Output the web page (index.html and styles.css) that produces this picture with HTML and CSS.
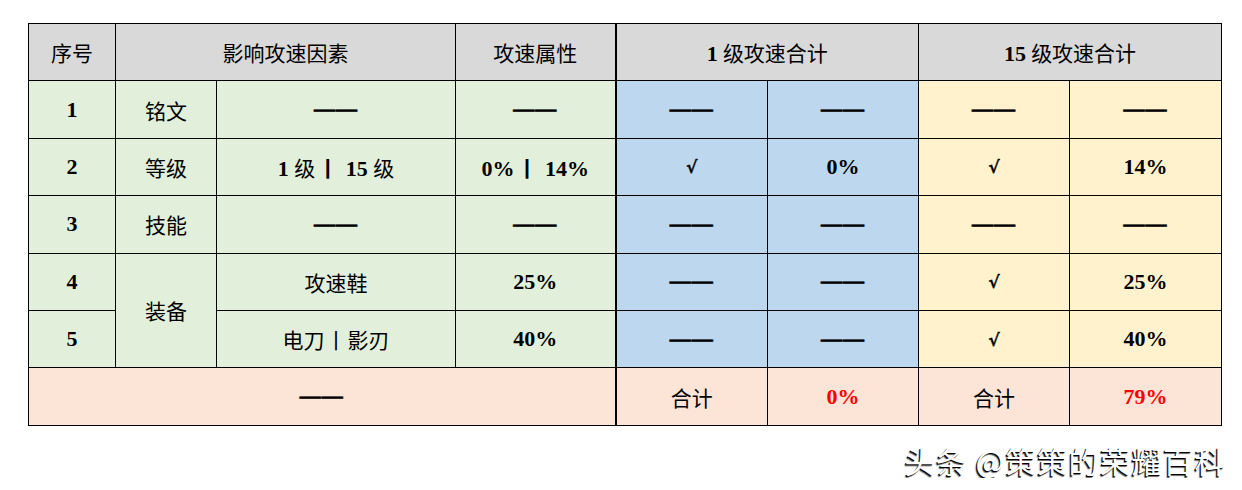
FILE: index.html
```html
<!DOCTYPE html>
<html lang="zh">
<head>
<meta charset="utf-8">
<link rel="stylesheet" href="styles.css">
</head>
<body>
<div class="page">
  <table class="grid">
    <colgroup>
      <col class="c1"><col class="c2"><col class="c3"><col class="c4">
      <col class="c5"><col class="c6"><col class="c7"><col class="c8">
    </colgroup>
    <tr class="head">
      <td>序号</td>
      <td colspan="2">影响攻速因素</td>
      <td class="split">攻速属性</td>
      <td colspan="2"><b>1</b> 级攻速合计</td>
      <td colspan="2"><b>15</b> 级攻速合计</td>
    </tr>
    <tr>
      <td class="g"><b>1</b></td>
      <td class="g">铭文</td>
      <td class="g"><b class="d">——</b></td>
      <td class="g split"><b class="d">——</b></td>
      <td class="bl"><b class="d">——</b></td>
      <td class="bl"><b class="d">——</b></td>
      <td class="y"><b class="d">——</b></td>
      <td class="y"><b class="d">——</b></td>
    </tr>
    <tr>
      <td class="g"><b>2</b></td>
      <td class="g">等级</td>
      <td class="g"><b>1 </b>级<b class="bar">丨</b><b> 15 </b>级</td>
      <td class="g split"><b>0%<span class="bar">丨</span> 14%</b></td>
      <td class="bl"><b class="ck">√</b></td>
      <td class="bl"><b>0%</b></td>
      <td class="y"><b class="ck">√</b></td>
      <td class="y"><b>14%</b></td>
    </tr>
    <tr>
      <td class="g"><b>3</b></td>
      <td class="g">技能</td>
      <td class="g"><b class="d">——</b></td>
      <td class="g split"><b class="d">——</b></td>
      <td class="bl"><b class="d">——</b></td>
      <td class="bl"><b class="d">——</b></td>
      <td class="y"><b class="d">——</b></td>
      <td class="y"><b class="d">——</b></td>
    </tr>
    <tr>
      <td class="g"><b>4</b></td>
      <td class="g" rowspan="2">装备</td>
      <td class="g">攻速鞋</td>
      <td class="g split"><b>25%</b></td>
      <td class="bl"><b class="d">——</b></td>
      <td class="bl"><b class="d">——</b></td>
      <td class="y"><b class="ck">√</b></td>
      <td class="y"><b>25%</b></td>
    </tr>
    <tr>
      <td class="g"><b>5</b></td>
      <td class="g">电刀<span class="thin">丨</span>影刃</td>
      <td class="g split"><b>40%</b></td>
      <td class="bl"><b class="d">——</b></td>
      <td class="bl"><b class="d">——</b></td>
      <td class="y"><b class="ck">√</b></td>
      <td class="y"><b>40%</b></td>
    </tr>
    <tr class="total">
      <td colspan="4" class="split"><b class="d">——</b></td>
      <td>合计</td>
      <td class="red"><b>0%</b></td>
      <td>合计</td>
      <td class="red"><b>79%</b></td>
    </tr>
  </table>
  <div class="mark">头条 @策策的荣耀百科</div>
</div>
</body>
</html>
```

FILE: styles.css
```css
html, body {
  margin: 0;
  padding: 0;
  background: #ffffff;
}

.page {
  padding: 23px 0 0 28px;
  width: 1193px;
  display: flex;
  flex-direction: column;
}

.grid {
  border-collapse: collapse;
  table-layout: fixed;
  width: 1193px;
  font-family: "Liberation Serif", "Noto Sans CJK SC", serif;
  font-size: 21px;
  color: #000;
  border: 1.5px solid #000;
}

.c1 { width: 87px; }
.c2 { width: 101px; }
.c3 { width: 239px; }
.c4 { width: 160px; }
.c5 { width: 152px; }
.c6 { width: 151px; }
.c7 { width: 151px; }
.c8 { width: 152px; }

.grid td {
  border: 1px solid #000;
  height: 56.4px;
  padding: 0;
  text-align: center;
  vertical-align: middle;
  font-weight: normal;
}

.grid b {
  font-weight: bold;
  font-size: 22px;
}

.grid b .bar {
  font-size: 21px;
}

.grid .d {
  font-family: "Liberation Serif", serif;
  font-size: 21px;
  letter-spacing: 1px;
  -webkit-text-stroke: 0.6px #000;
}

.grid .ck {
  font-family: "DejaVu Serif", "Liberation Serif", serif;
  font-size: 17px;
  -webkit-text-stroke: 0.4px #000;
}

.grid .bar {
  font-weight: bold;
  font-size: 21px;
  margin: 0 2px;
}

.grid .thin {
  margin: 0 1px;
}

.grid td.split {
  border-right: 2px solid #000;
}

.head td {
  background: #d9d9d9;
}

.g { background: #e2efda; }
.grid td.bl { background: #bdd7ee; }
.grid td.y { background: #fff2cc; }

.total td {
  background: #fce4d6;
}

.grid td.red {
  color: #ff0000;
}

.mark {
  align-self: flex-end;
  margin-top: 16px;
  margin-right: -5px;
  font-family: "Noto Sans CJK SC", sans-serif;
  font-size: 30px;
  line-height: 36px;
  letter-spacing: 1.5px;
  color: #ffffff;
  text-shadow: -1px 1px 0 #000, -1.5px 1.5px 1px rgba(0, 0, 0, 0.6);
}
```
